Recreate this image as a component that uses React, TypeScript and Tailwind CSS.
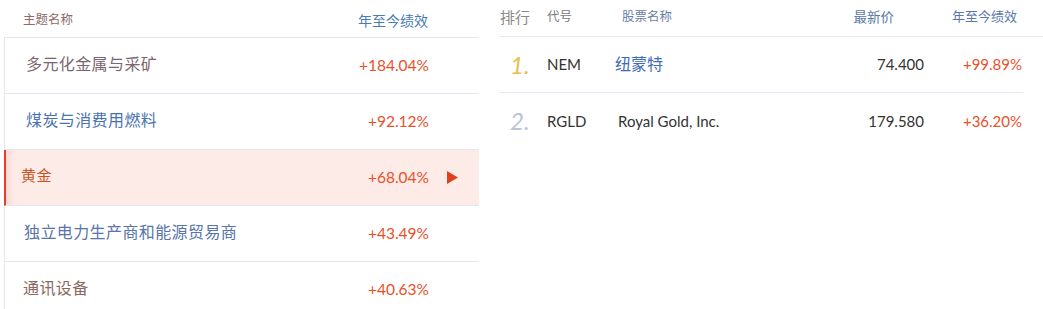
import React from 'react'

type Theme = {
  name: string
  perf: string
  color: string
  pad: string
  active?: boolean
}

type Stock = {
  rank: string
  rankColor: string
  code: string
  name: string
  nameColor: string
  price: string
  perf: string
}

const themes: Theme[] = [
  { name: '多元化金属与采矿', perf: '+184.04%', color: 'text-[#7b6670]', pad: 'pl-[21px]' },
  { name: '煤炭与消费用燃料', perf: '+92.12%', color: 'text-[#4a72b0]', pad: 'pl-[21px]' },
  { name: '黄金', perf: '+68.04%', color: 'text-[#c9521e]', pad: 'pl-[15px]', active: true },
  { name: '独立电力生产商和能源贸易商', perf: '+43.49%', color: 'text-[#5874a8]', pad: 'pl-[19px]' },
  { name: '通讯设备', perf: '+40.63%', color: 'text-[#8a6a60]', pad: 'pl-[18px]' }
]

const stocks: Stock[] = [
  {
    rank: '1.',
    rankColor: 'text-[#e6c04a]',
    code: 'NEM',
    name: '纽蒙特',
    nameColor: 'text-[#3f6cb4]',
    price: '74.400',
    perf: '+99.89%'
  },
  {
    rank: '2.',
    rankColor: 'text-[#b9c4d4]',
    code: 'RGLD',
    name: 'Royal Gold, Inc.',
    nameColor: 'text-[#333]',
    price: '179.580',
    perf: '+36.20%'
  }
]

const font = { fontFamily: 'Lato, "Noto Sans CJK SC", sans-serif' }

const App: React.FC = () => {
  return (
    <div className="flex w-[1043px] h-[309px] bg-white overflow-hidden" style={font}>
      {/* ---- theme list ---- */}
      <div className="ml-[4px] w-[475px] shrink-0 flex flex-col">
        <div className="h-[37px] shrink-0 flex items-center justify-between pl-[19px] pr-[51px] pt-[3px] text-[12.5px]">
          <span className="text-[#8c6b68]">主题名称</span>
          <span className="text-[#4a7ab5] text-[14px]">年至今绩效</span>
        </div>
        <div className="shrink-0 border-l border-t border-[#e2e7f1]">
          {themes.map((t) => (
            <div
              key={t.name}
              className={
                t.active
                  ? `relative h-[56px] flex items-center justify-between ${t.pad} pr-[21px] bg-[#fdebe8] border-b border-[#e2e7f1] -ml-px border-l-2 border-l-[#e0402c] shadow-[inset_8px_0_8px_-6px_rgba(224,64,44,0.15)]`
                  : `h-[56px] flex items-center justify-between ${t.pad} pr-[50px] border-b border-[#e2e7f1]`
              }
            >
              <span
                className={`${t.color} ${t.active ? 'text-[15px]' : 'text-[16px]'} mb-[4px] tracking-[0.4px]`}
              >
                {t.name}
              </span>
              <span className="flex items-center">
                <span className="text-[15.5px] text-[#e8502a]">{t.perf}</span>
                {t.active && (
                  <svg width="11" height="13" viewBox="0 0 11 13" className="ml-[18px]">
                    <path d="M0 0 L11 6.5 L0 13 Z" fill="#e0401e" />
                  </svg>
                )}
              </span>
            </div>
          ))}
        </div>
      </div>

      {/* ---- stock list ---- */}
      <div className="ml-[21px] flex-1 flex flex-col">
        <div className="h-[37px] shrink-0 flex items-center border-b border-[#e2e7f1] text-[12.5px] pb-[2px]">
          <span className="w-[47px] text-[15px] text-[#8a8a8a]">排行</span>
          <span className="w-[75px] text-[#7a7a7a]">代号</span>
          <span className="w-[150px] text-[#6a80a8]">股票名称</span>
          <span className="w-[122px] text-right text-[#5a78a8] text-[13.5px]">最新价</span>
          <span className="w-[123px] text-right text-[#5a78a8] text-[13px]">年至今绩效</span>
        </div>
        <div className="w-[523px] shrink-0">
          {stocks.map((s, i) => (
            <div
              key={s.code}
              className={`h-[56px] flex items-center ${i === 0 ? 'border-b border-[#e2e7f1]' : ''}`}
            >
              <span className={`w-[47px] pl-[10px] italic text-[24px] ${s.rankColor}`}>{s.rank}</span>
              <span className="w-[68px] text-[15px] text-[#333]">{s.code}</span>
              <span
                className={`w-[184px] ${i === 0 ? 'text-[16px] mb-[2px]' : 'text-[15px] pl-[3px]'} ${s.nameColor}`}
              >
                {s.name}
              </span>
              <span className="w-[125px] text-right text-[15px] text-[#333]">{s.price}</span>
              <span className="w-[98px] text-right text-[15px] text-[#e8502a]">{s.perf}</span>
            </div>
          ))}
        </div>
      </div>
    </div>
  )
}

export default App
